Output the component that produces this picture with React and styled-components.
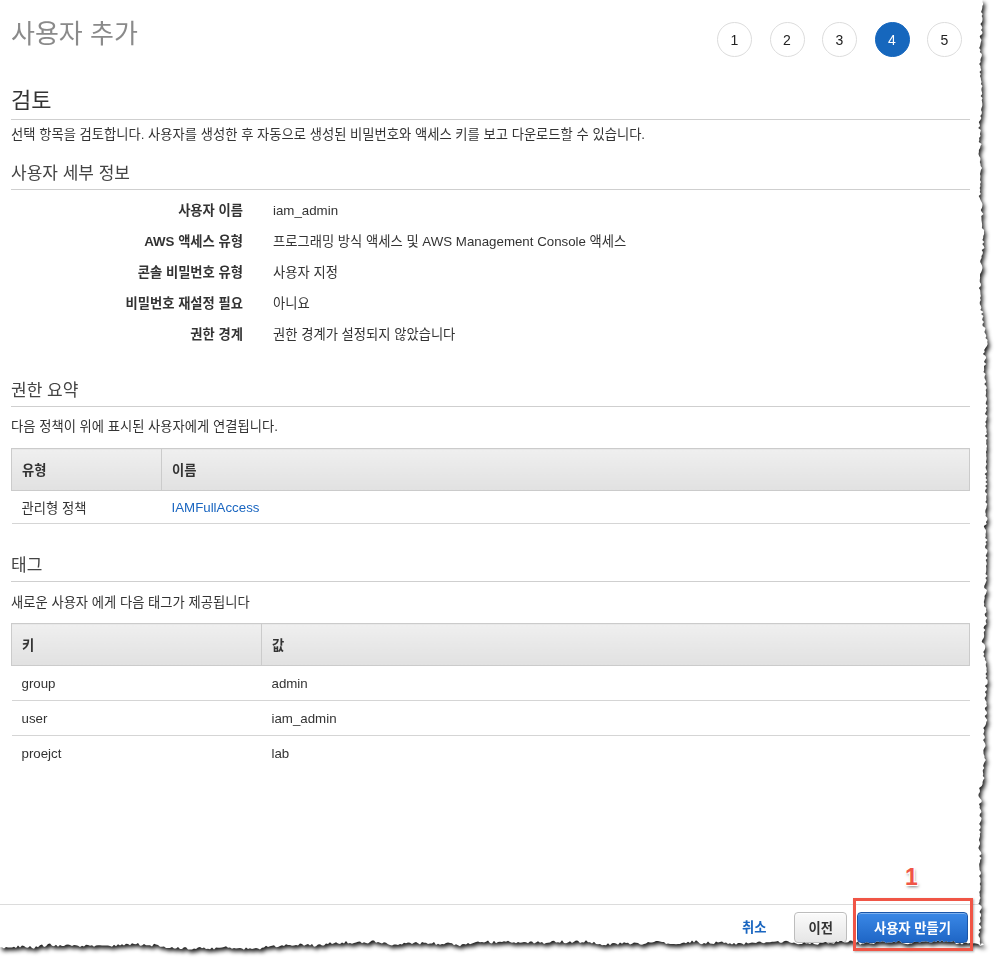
import React from "react";
import styled, { createGlobalStyle } from "styled-components";

const GlobalStyle = createGlobalStyle`
  html, body { margin: 0; padding: 0; background: #fff; }
  body {
    font-family: "Liberation Sans", "Noto Sans CJK KR", sans-serif;
    color: #333;
    font-size: 13.3px;
  }
`;

const PAPER_W = 992;
const PAPER_H = 954;

function mulberry32(a) {
  return function () {
    a |= 0;
    a = (a + 0x6d2b79f5) | 0;
    let t = Math.imul(a ^ (a >>> 15), 1 | a);
    t = (t + Math.imul(t ^ (t >>> 7), 61 | t)) ^ t;
    return ((t ^ (t >>> 14)) >>> 0) / 4294967296;
  };
}

function tornPolygon() {
  const rnd = mulberry32(17);
  const pts = ["0px 0px"];
  let walk = 0;
  const right = [];
  for (let y = 0; y <= PAPER_H - 8; y += 2) {
    walk += (rnd() - 0.5) * 1.8;
    walk = Math.max(-3.5, Math.min(3.5, walk));
    const x = PAPER_W - 9 + walk + (rnd() - 0.5) * 2.6;
    right.push(`${x.toFixed(1)}px ${y}px`);
  }
  let walk2 = 0;
  const bottom = [];
  for (let x = PAPER_W - 8; x >= 0; x -= 2) {
    walk2 += (rnd() - 0.5) * 1.8;
    walk2 = Math.max(-3.5, Math.min(3.5, walk2));
    const y = PAPER_H - 9 + walk2 + (rnd() - 0.5) * 2.6;
    bottom.push(`${x}px ${y.toFixed(1)}px`);
  }
  return `polygon(${pts.concat(right, bottom).join(", ")})`;
}

const CLIP = tornPolygon();

const Page = styled.div`
  position: relative;
  width: 1001px;
  height: 963px;
  overflow: hidden;
`;

const ShadowWrap = styled.div`
  width: ${PAPER_W}px;
  height: ${PAPER_H}px;
  filter: drop-shadow(2px 3px 2px rgba(0, 0, 0, 0.9));
`;

const Paper = styled.div`
  width: ${PAPER_W}px;
  height: ${PAPER_H}px;
  background: #fff;
  display: flex;
  flex-direction: column;
`;

const Content = styled.div`
  flex: 1;
  padding: 0 ${PAPER_W - 970}px 0 11px;
  display: flex;
  flex-direction: column;
`;

const Header = styled.div`
  display: flex;
  justify-content: space-between;
  align-items: flex-start;
`;

const Title = styled.h1`
  margin: 18px 0 0;
  font-size: 26px;
  line-height: 32px;
  font-weight: 400;
  color: #8a8a8a;
`;

const Steps = styled.div`
  display: flex;
  gap: 17.5px;
  margin-top: 22px;
  margin-right: 8px;
`;

const Step = styled.div`
  width: 35px;
  height: 35px;
  box-sizing: border-box;
  border-radius: 50%;
  border: 1px solid ${(p) => (p.$active ? "#1667bd" : "#dcdcdc")};
  background: ${(p) => (p.$active ? "#1667bd" : "#fff")};
  color: ${(p) => (p.$active ? "#fff" : "#222")};
  display: flex;
  align-items: center;
  justify-content: center;
  font-size: 14px;
`;

const PageHeading = styled.h2`
  margin: 30px 0 0;
  font-size: 22px;
  line-height: 28px;
  font-weight: 400;
  color: #333;
  padding-bottom: 4px;
  border-bottom: 1px solid #cfcfcf;
`;

const SectionHeading = styled.h3`
  margin: ${(p) => p.$mt}px 0 0;
  font-size: 17px;
  line-height: 22px;
  font-weight: 400;
  color: #444;
  padding-bottom: 4px;
  border-bottom: 1px solid #cfcfcf;
`;

const Desc = styled.p`
  margin: ${(p) => p.$mt}px 0 0;
  line-height: 17px;
  color: #333;
`;

const DetailGrid = styled.dl`
  display: grid;
  grid-template-columns: 232px 1fr;
  column-gap: 30px;
  margin: 5px 0 0;
`;

const DLabel = styled.dt`
  text-align: right;
  font-weight: 700;
  color: #333;
  line-height: 17px;
  padding: 7px 0;
`;

const DValue = styled.dd`
  margin: 0;
  color: #333;
  line-height: 17px;
  padding: 7px 0;
`;

const Table = styled.table`
  margin-top: ${(p) => p.$mt}px;
  width: 100%;
  border-collapse: collapse;
`;

const Th = styled.th`
  text-align: left;
  font-weight: 700;
  color: #333;
  height: 42px;
  padding: 0 10px;
  background: linear-gradient(#efefef, #e1e1e1);
  border: 1px solid #cbcbcb;
  width: ${(p) => p.$w || "auto"};
  box-sizing: border-box;
`;

const Td = styled.td`
  height: ${(p) => p.$h}px;
  padding: 0 10px;
  color: #333;
  border-bottom: ${(p) => (p.$last ? "none" : "1px solid #d5d5d5")};
`;

const Link = styled.a`
  color: #1a66c0;
  text-decoration: none;
`;

const Footer = styled.div`
  border-top: 1px solid #dcdcdc;
  display: flex;
  justify-content: flex-end;
  align-items: flex-start;
  gap: 10px;
  padding: 7px ${PAPER_W - 968}px 0 0;
  height: 50px;
  box-sizing: border-box;
`;

const CancelLink = styled.a`
  color: #1a66c0;
  font-weight: 700;
  margin-right: 18px;
  line-height: 31px;
`;

const Button = styled.button`
  font-family: inherit;
  font-size: 13.3px;
  font-weight: 700;
  height: 31px;
  border-radius: 4px;
  padding: 0 ${(p) => (p.$primary ? "16px" : "13px")};
  color: ${(p) => (p.$primary ? "#fff" : "#333")};
  border: 1px solid ${(p) => (p.$primary ? "#1a56a8" : "#bdbdbd")};
  background: ${(p) =>
    p.$primary
      ? "linear-gradient(#3a88e6, #1f66c6)"
      : "linear-gradient(#fafafa, #e6e6e6)"};
  box-shadow: ${(p) =>
    p.$primary ? "inset 0 1px 0 rgba(255,255,255,0.35)" : "inset 0 1px 0 #fff"};
`;

const Annotation = styled.div`
  position: absolute;
  left: 853px;
  top: 866px;
  width: 120px;
  display: flex;
  flex-direction: column;
  align-items: center;
  pointer-events: none;
`;

const Marker = styled.span`
  font-family: "Liberation Sans", sans-serif;
  font-weight: 700;
  font-size: 23px;
  line-height: 23px;
  color: #f05546;
  text-shadow: 0 0 1px #fff, 1px 1px 0 #fff, -1px -1px 0 #fff, 1px -1px 0 #fff,
    -1px 1px 0 #fff, 1px 2px 3px rgba(0, 0, 0, 0.5);
  margin-left: -3px;
`;

const Highlight = styled.div`
  margin-top: 9px;
  width: 120px;
  height: 53px;
  box-sizing: border-box;
  border: 3px solid #f05546;
  box-shadow: 1px 1px 2px rgba(0, 0, 0, 0.3);
`;

const details = [
  ["사용자 이름", "iam_admin"],
  ["AWS 액세스 유형", "프로그래밍 방식 액세스 및 AWS Management Console 액세스"],
  ["콘솔 비밀번호 유형", "사용자 지정"],
  ["비밀번호 재설정 필요", "아니요"],
  ["권한 경계", "권한 경계가 설정되지 않았습니다"],
];

const tags = [
  ["group", "admin"],
  ["user", "iam_admin"],
  ["proejct", "lab"],
];

export default function App() {
  return (
    <Page>
      <GlobalStyle />
      <ShadowWrap>
        <Paper style={{ clipPath: CLIP }}>
          <Content>
            <Header>
              <Title>사용자 추가</Title>
              <Steps>
                {[1, 2, 3, 4, 5].map((n) => (
                  <Step key={n} $active={n === 4}>
                    {n}
                  </Step>
                ))}
              </Steps>
            </Header>

            <PageHeading>검토</PageHeading>
            <Desc $mt={6}>
              선택 항목을 검토합니다. 사용자를 생성한 후 자동으로 생성된 비밀번호와 액세스 키를 보고 다운로드할 수 있습니다.
            </Desc>

            <SectionHeading $mt={20}>사용자 세부 정보</SectionHeading>
            <DetailGrid>
              {details.map(([k, v]) => (
                <React.Fragment key={k}>
                  <DLabel>{k}</DLabel>
                  <DValue>{v}</DValue>
                </React.Fragment>
              ))}
            </DetailGrid>

            <SectionHeading $mt={30}>권한 요약</SectionHeading>
            <Desc $mt={11}>다음 정책이 위에 표시된 사용자에게 연결됩니다.</Desc>
            <Table $mt={13}>
              <thead>
                <tr>
                  <Th $w="150px">유형</Th>
                  <Th>이름</Th>
                </tr>
              </thead>
              <tbody>
                <tr>
                  <Td $h={32}>관리형 정책</Td>
                  <Td $h={32}>
                    <Link>IAMFullAccess</Link>
                  </Td>
                </tr>
              </tbody>
            </Table>

            <SectionHeading $mt={31}>태그</SectionHeading>
            <Desc $mt={12}>새로운 사용자 에게 다음 태그가 제공됩니다</Desc>
            <Table $mt={12}>
              <thead>
                <tr>
                  <Th $w="250px">키</Th>
                  <Th>값</Th>
                </tr>
              </thead>
              <tbody>
                {tags.map(([k, v], i) => (
                  <tr key={k}>
                    <Td $h={34} $last={i === tags.length - 1}>{k}</Td>
                    <Td $h={34} $last={i === tags.length - 1}>{v}</Td>
                  </tr>
                ))}
              </tbody>
            </Table>
          </Content>

          <Footer>
            <CancelLink>취소</CancelLink>
            <Button>이전</Button>
            <Button $primary>사용자 만들기</Button>
          </Footer>
        </Paper>
      </ShadowWrap>
      <Annotation>
        <Marker>1</Marker>
        <Highlight />
      </Annotation>
    </Page>
  );
}
